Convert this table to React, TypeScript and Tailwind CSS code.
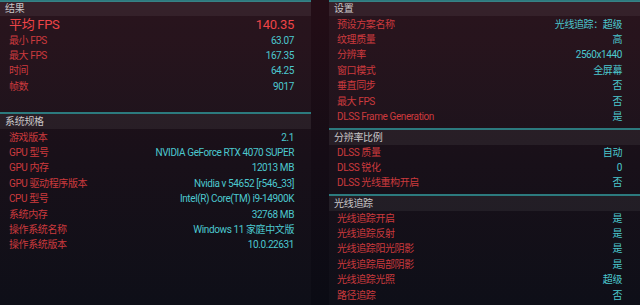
import React from 'react';

type Row = [string, string];

const font = {
  fontFamily: 'Roboto, "Noto Sans CJK SC", sans-serif',
};

const results: Row[] = [
  ['最小 FPS', '63.07'],
  ['最大 FPS', '167.35'],
  ['时间', '64.25'],
  ['帧数', '9017'],
];

const system: Row[] = [
  ['游戏版本', '2.1'],
  ['GPU 型号', 'NVIDIA GeForce RTX 4070 SUPER'],
  ['GPU 内存', '12013 MB'],
  ['GPU 驱动程序版本', 'Nvidia v 54652 [r546_33]'],
  ['CPU 型号', 'Intel(R) Core(TM) i9-14900K'],
  ['系统内存', '32768 MB'],
  ['操作系统名称', 'Windows 11 家庭中文版'],
  ['操作系统版本', '10.0.22631'],
];

const settings: Row[] = [
  ['预设方案名称', '光线追踪：超级'],
  ['纹理质量', '高'],
  ['分辨率', '2560x1440'],
  ['窗口模式', '全屏幕'],
  ['垂直同步', '否'],
  ['最大 FPS', '否'],
  ['DLSS Frame Generation', '是'],
];

const scaling: Row[] = [
  ['DLSS 质量', '自动'],
  ['DLSS 锐化', '0'],
  ['DLSS 光线重构开启', '否'],
];

const rayTracing: Row[] = [
  ['光线追踪开启', '是'],
  ['光线追踪反射', '是'],
  ['光线追踪阳光阴影', '是'],
  ['光线追踪局部阴影', '是'],
  ['光线追踪光照', '超级'],
  ['路径追踪', '否'],
];

const Header = ({ title, pad }: { title: string; pad: string }) => (
  <div className={`h-[15px] flex items-center bg-white/[0.06] text-[10px] leading-[12px] tracking-[-0.3px] text-[#c9c6c8] ${pad}`}>
    {title}
  </div>
);

const Rows = ({ rows, pad }: { rows: Row[]; pad: string }) => (
  <div className={pad}>
    {rows.map(([label, value]) => (
      <div key={label} className="h-[15.4px] flex items-center justify-between text-[10px] leading-[12px] tracking-[-0.4px]">
        <span className="text-[#cc3a3d]">{label}</span>
        <span className="text-[#4cc8cf]">{value}</span>
      </div>
    ))}
  </div>
);

export default function App() {
  return (
    <div
      style={font}
      className="w-[640px] h-[305px] overflow-hidden flex gap-[18px] bg-gradient-to-b from-[#240d16] via-[#150c15] to-[#0a0b14]"
    >
      <div className="w-[311px] flex flex-col">
        <div className="h-[112px] border-t-2 border-[#2c7a7e] bg-white/[0.03]">
          <Header title="结果" pad="pl-[5px] -mt-[1px]" />
          <div className="pl-[9px] pr-[17px]">
            <div className="h-[17px] flex items-center justify-between leading-[15px] tracking-[-0.3px]">
              <span className="text-[13px] text-[#ee4447]">平均 FPS</span>
              <span className="text-[13px] text-[#ee4447]">140.35</span>
            </div>
          </div>
          <Rows rows={results} pad="pl-[9px] pr-[17px]" />
        </div>
        <div className="flex-1 border-t-2 border-[#2c7a7e] bg-white/[0.02]">
          <Header title="系统规格" pad="pl-[5px]" />
          <Rows rows={system} pad="pl-[9px] pr-[17px] pt-[1px]" />
        </div>
      </div>
      <div className="flex-1 flex flex-col">
        <div className="h-[128px] border-t-2 border-[#2c7a7e] bg-white/[0.03]">
          <Header title="设置" pad="pl-[5px] -mt-[1px]" />
          <Rows rows={settings} pad="pl-[8px] pr-[18px] pt-[1px]" />
        </div>
        <div className="h-[66px] border-t-2 border-[#2c7a7e] bg-white/[0.02]">
          <Header title="分辨率比例" pad="pl-[5px]" />
          <Rows rows={scaling} pad="pl-[8px] pr-[18px]" />
        </div>
        <div className="flex-1 border-t-2 border-[#2c7a7e] bg-white/[0.02]">
          <Header title="光线追踪" pad="pl-[5px]" />
          <Rows rows={rayTracing} pad="pl-[8px] pr-[18px]" />
        </div>
      </div>
    </div>
  );
}
